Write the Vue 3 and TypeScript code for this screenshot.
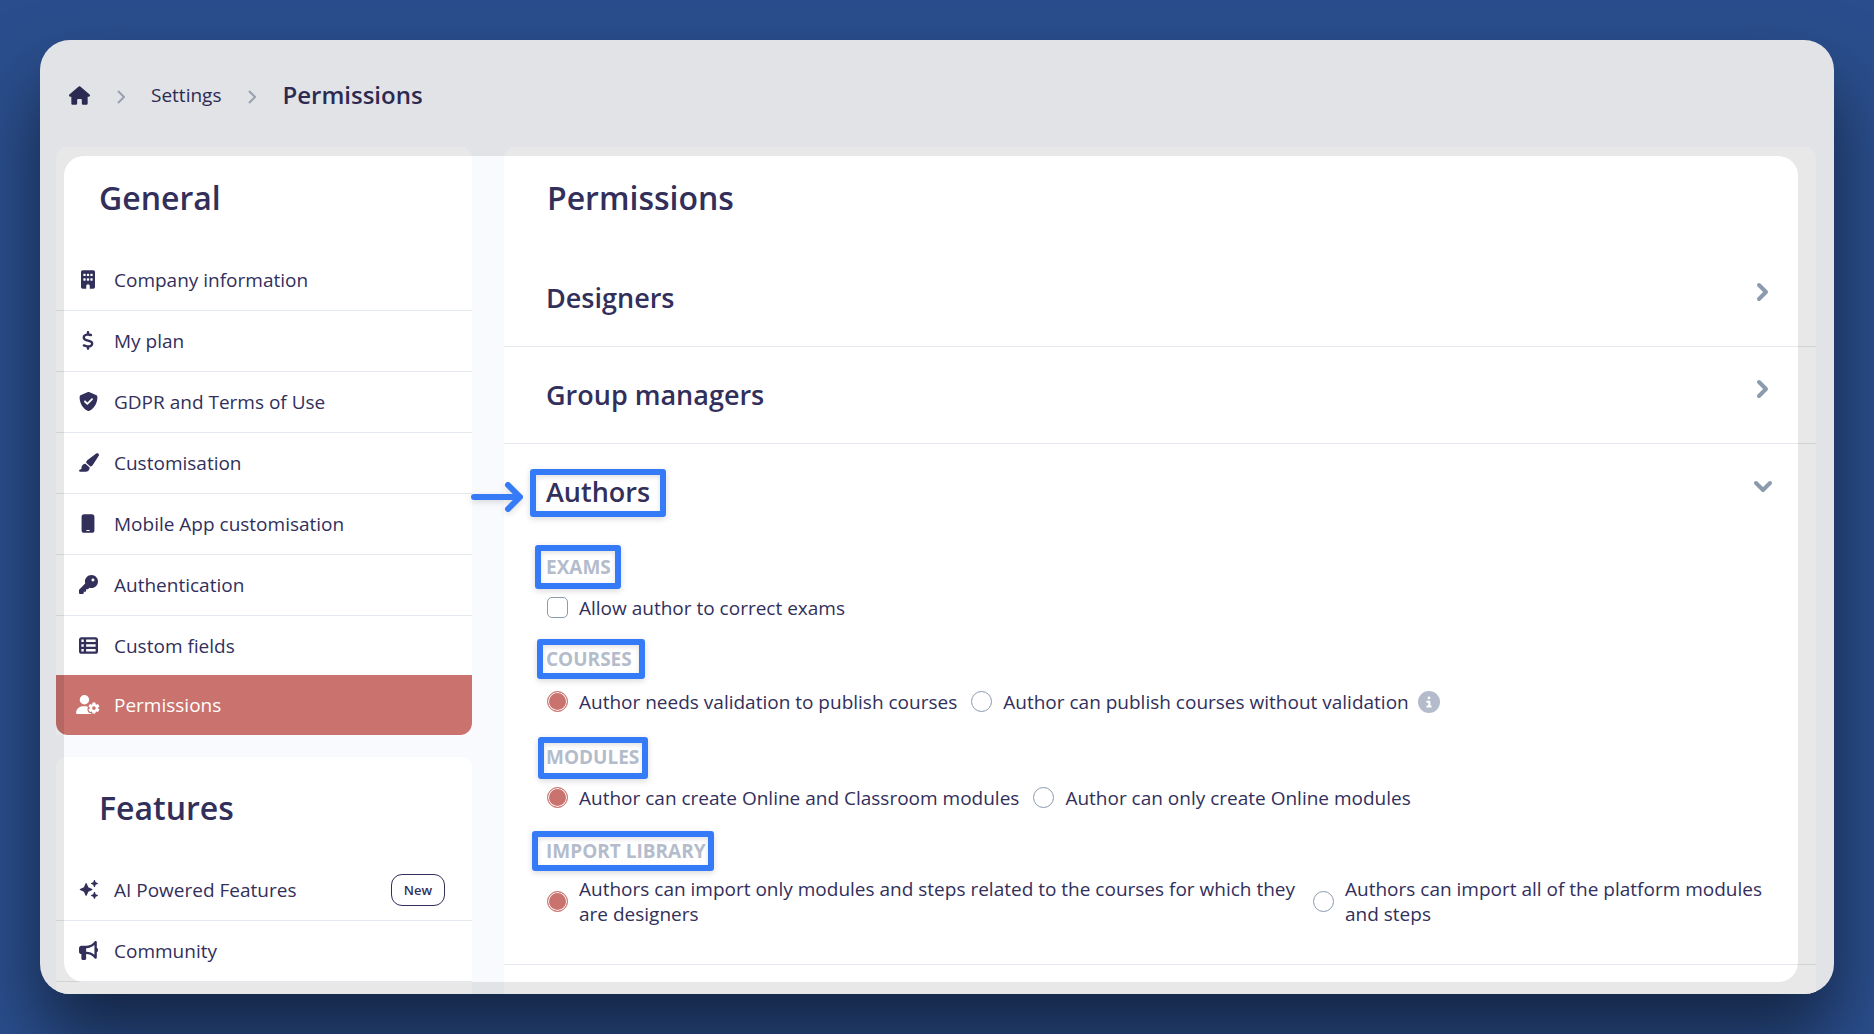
<script setup lang="ts">
import { ref } from 'vue'

interface MenuItem {
  label: string
  icon: string
  active?: boolean
  badge?: string
}

interface Icon {
  box: string
  width: number
  d: string
}

const icons: Record<string, Icon> = {
  building: {
    box: '0 0 384 512',
    width: 14,
    d: 'M48 0C21.5 0 0 21.5 0 48V464c0 26.5 21.5 48 48 48h96V432c0-26.5 21.5-48 48-48s48 21.5 48 48v80h96c26.5 0 48-21.5 48-48V48c0-26.5-21.5-48-48-48H48zM64 240c0-8.8 7.2-16 16-16h32c8.8 0 16 7.2 16 16v32c0 8.8-7.2 16-16 16H80c-8.8 0-16-7.2-16-16V240zm112-16h32c8.8 0 16 7.2 16 16v32c0 8.8-7.2 16-16 16H176c-8.8 0-16-7.2-16-16V240c0-8.8 7.2-16 16-16zm80 16c0-8.8 7.2-16 16-16h32c8.8 0 16 7.2 16 16v32c0 8.8-7.2 16-16 16H272c-8.8 0-16-7.2-16-16V240zM80 96h32c8.8 0 16 7.2 16 16v32c0 8.8-7.2 16-16 16H80c-8.8 0-16-7.2-16-16V112c0-8.8 7.2-16 16-16zm80 16c0-8.8 7.2-16 16-16h32c8.8 0 16 7.2 16 16v32c0 8.8-7.2 16-16 16H176c-8.8 0-16-7.2-16-16V112zM272 96h32c8.8 0 16 7.2 16 16v32c0 8.8-7.2 16-16 16H272c-8.8 0-16-7.2-16-16V112c0-8.8 7.2-16 16-16z',
  },
  dollar: {
    box: '0 0 320 512',
    width: 12,
    d: 'M160 0c17.7 0 32 14.3 32 32V67.7c1.6 .2 3.1 .4 4.7 .7c.4 .1 .7 .1 1.1 .2l48 8.8c17.4 3.2 28.9 19.9 25.7 37.2s-19.9 28.9-37.2 25.7l-47.5-8.7c-31.3-4.6-58.9-1.5-78.3 6.2s-27.2 18.3-29 28.1c-2 10.7-.5 16.7 1.2 20.4c1.8 3.9 5.5 8.3 12.8 13.2c16.3 10.7 41.3 17.7 73.7 26.3l2.9 .8c28.6 7.6 63.6 16.8 89.6 33.8c14.2 9.3 27.6 21.9 35.9 39.5c8.5 17.9 10.3 37.9 6.4 59.2c-6.9 38-33.1 63.4-65.6 76.7c-13.7 5.6-28.6 9.2-44.4 11V480c0 17.7-14.3 32-32 32s-32-14.3-32-32V445.1c-.4-.1-.9-.1-1.3-.2l-.2 0 0 0c-24.4-3.8-64.5-14.3-91.5-26.3c-16.1-7.2-23.4-26.1-16.2-42.2s26.1-23.4 42.2-16.2c20.9 9.3 55.3 18.5 75.2 21.6c31.9 4.7 58.2 2 76-5.3c16.9-6.9 24.6-16.9 26.8-28.9c1.9-10.6 .4-16.7-1.3-20.4c-1.9-4-5.6-8.4-13-13.3c-16.4-10.7-41.5-17.7-74-26.3l-2.8-.7 0 0C119.4 279.3 84.4 270 58.4 253c-14.2-9.3-27.5-22-35.8-39.6c-8.4-17.9-10.1-37.9-6.1-59.2C23.7 116 52.3 91.2 84.8 78.3c13.3-5.3 27.9-8.9 43.2-11V32c0-17.7 14.3-32 32-32z',
  },
  shield: {
    box: '0 0 512 512',
    width: 19,
    d: 'M256 0c4.6 0 9.2 1 13.4 2.9L457.7 82.8c22 9.3 38.4 31 38.3 57.2c-.5 99.2-41.3 280.7-213.6 363.2c-16.7 8-36.1 8-52.8 0C57.3 420.7 16.5 239.2 16 140c-.1-26.2 16.3-47.9 38.3-57.2L242.7 2.9C246.8 1 251.4 0 256 0zM369 209c9-9 9-25 0-34s-25-9-34 0L224 286l-47-47c-9-9-25-9-34 0s-9 25 0 34l64 64c9 9 25 9 34 0L369 209z',
  },
  brush: {
    box: '0 0 576 512',
    width: 21,
    d: 'M339.3 367.1c27.3-3.9 51.9-19.4 67.2-42.9L568.2 74.1c12.6-19.5 9.4-45.3-7.6-61.2S517.7-4.4 499.1 9.6L262.4 187.2c-24 18-38.2 46.1-38.4 76.1L339.3 367.1zm-19.6 25.4l-116-104.4C143.9 290.3 96 339.6 96 400c0 3.9 .2 7.8 .6 11.6C98.4 429.1 86.4 448 68.8 448H64c-17.7 0-32 14.3-32 32s14.3 32 32 32H208c61.9 0 112-50.1 112-112c0-2.5-.1-5-.2-7.5z',
  },
  mobile: {
    box: '0 0 384 512',
    width: 14,
    d: 'M80 0C45 0 16 29 16 64V448c0 35 29 64 64 64H304c35 0 64-29 64-64V64c0-35-29-64-64-64H80zM160 432h64c9 0 16 7 16 16s-7 16-16 16H160c-9 0-16-7-16-16s7-16 16-16z',
  },
  key: {
    box: '0 0 512 512',
    width: 19,
    d: 'M336 352c97.2 0 176-78.8 176-176S433.2 0 336 0S160 78.8 160 176c0 18.7 2.9 36.8 8.3 53.7L7 391c-4.5 4.5-7 10.6-7 17v80c0 13.3 10.7 24 24 24h80c13.3 0 24-10.7 24-24V448h40c13.3 0 24-10.7 24-24V384h40c6.4 0 12.5-2.5 17-7l33.3-33.3c16.9 5.4 35 8.3 53.7 8.3zM376 96a40 40 0 1 1 0 80 40 40 0 1 1 0-80z',
  },
  table: {
    box: '0 0 512 512',
    width: 19,
    d: 'M64 32C29 32 0 61 0 96V416c0 35 29 64 64 64H448c35 0 64-29 64-64V96c0-35-29-64-64-64H64zM64 96h64v64H64zM192 96H448v64H192zM64 224h64v64H64zM192 224H448v64H192zM64 352h64v64H64zM192 352H448v64H192z',
  },
  userGear: {
    box: '0 0 640 512',
    width: 24,
    d: 'M224 0a128 128 0 1 1 0 256A128 128 0 1 1 224 0zM178.3 304h91.4c11.8 0 23.4 1.2 34.5 3.3c-2.1 18.5 7.4 35.6 21.8 44.8c-16.6 10.6-26.7 31.6-20 53.3c4 12.9 9.4 25.5 16.4 37.6s15.2 23.1 24.4 33c15.7 16.9 39.6 18.4 57.2 8.7v.9c0 9.2 2.7 18.5 7.9 26.3H29.7C13.3 512 0 498.7 0 482.3C0 383.8 79.8 304 178.3 304zM436 218.2c0-7 4.5-13.3 11.3-14.8c10.5-2.4 21.5-3.7 32.7-3.7s22.2 1.3 32.7 3.7c6.8 1.5 11.3 7.8 11.3 14.8v30.6c7.9 3.4 15.4 7.7 22.3 12.8l24.9-14.3c6.1-3.5 13.7-2.7 18.5 2.4c7.6 8.1 14.3 17.2 20.1 27.2s10.3 20.4 13.5 31c2.1 6.7-1.1 13.7-7.2 17.2l-25 14.4c.4 4 .7 8.1 .7 12.3s-.2 8.2-.7 12.3l25 14.4c6.1 3.5 9.2 10.5 7.2 17.2c-3.3 10.6-7.8 21-13.5 31s-12.5 19.1-20.1 27.2c-4.8 5.1-12.5 5.9-18.5 2.4l-24.9-14.3c-6.9 5.1-14.3 9.4-22.3 12.8l0 30.6c0 7-4.5 13.3-11.3 14.8c-10.5 2.4-21.5 3.7-32.7 3.7s-22.2-1.3-32.7-3.7c-6.8-1.5-11.3-7.8-11.3-14.8V454.8c-8-3.4-15.6-7.7-22.5-12.9l-24.7 14.3c-6.1 3.5-13.7 2.7-18.5-2.4c-7.6-8.1-14.3-17.2-20.1-27.2s-10.3-20.4-13.5-31c-2.1-6.7 1.1-13.7 7.2-17.2l24.8-14.3c-.4-4.1-.7-8.2-.7-12.4s.2-8.3 .7-12.4L343.8 325c-6.1-3.5-9.2-10.5-7.2-17.2c3.3-10.6 7.7-21 13.5-31s12.5-19.1 20.1-27.2c4.8-5.1 12.4-5.9 18.5-2.4l24.8 14.3c6.9-5.1 14.5-9.4 22.5-12.9V218.2zm92.1 133.5a48.1 48.1 0 1 0 -96.1 0 48.1 48.1 0 1 0 96.1 0z',
  },
  sparkles: {
    box: '0 0 512 512',
    width: 19,
    d: 'M192 80c8 0 12 4 15 11l45 103 103 46c14 6 14 26 0 32l-103 45-45 103c-6 14-24 14-30 0l-45-103-103-45c-14-6-14-26 0-32l103-46 45-103c3-7 7-11 15-11zM416 0c8 0 12 4 15 12l18 51 51 18c16 6 16 24 0 30l-51 18-18 51c-6 16-24 16-30 0l-18-51-51-18c-16-6-16-24 0-30l51-18 18-51c3-8 7-12 15-12zM416 320c8 0 12 4 15 12l18 51 51 18c16 6 16 24 0 30l-51 18-18 51c-6 16-24 16-30 0l-18-51-51-18c-16-6-16-24 0-30l51-18 18-51c3-8 7-12 15-12z',
  },
  bullhorn: {
    box: '0 0 512 512',
    width: 19,
    d: 'M480 32c0-12.9-7.8-24.6-19.8-29.6s-25.7-2.2-34.9 6.9L381.7 53c-48 48-113.1 75-181 75H192 160 64c-35.3 0-64 28.7-64 64v96c0 35.3 28.7 64 64 64l0 128c0 17.7 14.3 32 32 32h64c17.7 0 32-14.3 32-32V352l8.7 0c67.9 0 133 27 181 75l43.6 43.6c9.2 9.2 22.9 11.9 34.9 6.9s19.8-16.6 19.8-29.6V300.4c18.6-8.8 32-32.5 32-60.4s-13.4-51.6-32-60.4V32zm-64 76.7V240 371.3C357.2 317.8 280.5 288 200.7 288H192V192h8.7c79.8 0 156.5-29.8 215.3-83.3z',
  },
}

const groups: { title: string; items: MenuItem[] }[] = [
  {
    title: 'General',
    items: [
      { label: 'Company information', icon: 'building' },
      { label: 'My plan', icon: 'dollar' },
      { label: 'GDPR and Terms of Use', icon: 'shield' },
      { label: 'Customisation', icon: 'brush' },
      { label: 'Mobile App customisation', icon: 'mobile' },
      { label: 'Authentication', icon: 'key' },
      { label: 'Custom fields', icon: 'table' },
      { label: 'Permissions', icon: 'userGear', active: true },
    ],
  },
  {
    title: 'Features',
    items: [
      { label: 'AI Powered Features', icon: 'sparkles', badge: 'New' },
      { label: 'Community', icon: 'bullhorn' },
    ],
  },
]

const correctExams = ref(false)
const publishing = ref('validation')
const modules = ref('all')
const library = ref('related')
</script>

<template>
  <div class="page">
    <div class="window">
      <nav class="crumbs" aria-label="Breadcrumb">
        <a href="#" class="home" aria-label="Home">
          <svg viewBox="0 0 576 512" width="21" height="19"><path fill="currentColor" d="M575.8 255.5c0 18-15 32.1-32 32.1h-32l.7 160.2c0 2.7-.2 5.4-.5 8.1V472c0 22.1-17.9 40-40 40H456c-1.1 0-2.2 0-3.3-.1c-1.4 .1-2.8 .1-4.2 .1H416 392c-22.1 0-40-17.9-40-40V448 384c0-17.7-14.3-32-32-32H256c-17.7 0-32 14.3-32 32v64 24c0 22.1-17.9 40-40 40H160 128.1c-1.5 0-3-.1-4.5-.2c-1.2 .1-2.4 .2-3.6 .2H104c-22.1 0-40-17.9-40-40V360c0-.9 0-1.9 .1-2.8V287.6H32c-18 0-32-14-32-32.1c0-9 3-17 10-24L266.4 8c7-7 15-8 22-8s15 2 21 7L564.8 231.5c8 7 12 15 11 24z" /></svg>
        </a>
        <svg class="crumb-arrow" viewBox="0 0 8 14" width="8" height="14"><path d="M1 1l6 6-6 6" /></svg>
        <a href="#" class="crumb">Settings</a>
        <svg class="crumb-arrow" viewBox="0 0 8 14" width="8" height="14"><path d="M1 1l6 6-6 6" /></svg>
        <h1 class="crumb-current">Permissions</h1>
      </nav>

      <div class="columns">
        <aside class="sidebar">
          <section v-for="group in groups" :key="group.title" class="card menu">
            <h2 class="card-title">{{ group.title }}</h2>
            <a
              v-for="item in group.items"
              :key="item.label"
              href="#"
              class="menu-item"
              :class="{ active: item.active }"
            >
              <span class="menu-icon">
                <svg :viewBox="icons[item.icon].box" :width="icons[item.icon].width" height="19">
                  <path fill="currentColor" fill-rule="evenodd" :d="icons[item.icon].d" />
                </svg>
              </span>
              <span class="menu-label">{{ item.label }}</span>
              <span v-if="item.badge" class="badge">{{ item.badge }}</span>
            </a>
          </section>
        </aside>

        <main class="card">
          <h2 class="card-title">Permissions</h2>

          <h3 class="role">
            <button type="button" class="role-button" aria-expanded="false">
              <span>Designers</span>
              <svg class="chevron" viewBox="0 0 20 20" width="20" height="20"><path d="M6 3l7 7-7 7" /></svg>
            </button>
          </h3>
          <h3 class="role">
            <button type="button" class="role-button" aria-expanded="false">
              <span>Group managers</span>
              <svg class="chevron" viewBox="0 0 20 20" width="20" height="20"><path d="M6 3l7 7-7 7" /></svg>
            </button>
          </h3>
          <h3 class="role open">
            <button type="button" class="role-button" aria-expanded="true">
              <span class="marked mark-authors">
                Authors
                <svg class="pointer" viewBox="0 0 52 30" width="52" height="30"><path d="M3 15h45M37 3l12 12-12 12" /></svg>
              </span>
              <svg class="chevron" viewBox="0 0 20 20" width="20" height="20"><path d="M3 7l7 7 7-7" /></svg>
            </button>
          </h3>

          <div class="settings">
            <section class="setting compact">
              <h4 class="caption"><span class="marked mark-exams">EXAMS</span></h4>
              <div class="options">
                <label class="option">
                  <input v-model="correctExams" type="checkbox" class="box" />
                  <span>Allow author to correct exams</span>
                </label>
              </div>
            </section>

            <section class="setting">
              <h4 class="caption"><span class="marked mark-courses">COURSES</span></h4>
              <div class="options with-info">
                <label class="option">
                  <input v-model="publishing" type="radio" name="publishing" value="validation" class="dot" />
                  <span>Author needs validation to publish courses</span>
                </label>
                <label class="option">
                  <input v-model="publishing" type="radio" name="publishing" value="free" class="dot" />
                  <span>Author can publish courses without validation</span>
                </label>
                <button type="button" class="info" aria-label="More information">
                  <svg viewBox="0 0 512 512" width="22" height="22"><path fill="currentColor" fill-rule="evenodd" d="M256 512A256 256 0 1 0 256 0a256 256 0 1 0 0 512zM216 336h24V272H216c-13.3 0-24-10.7-24-24s10.7-24 24-24h48c13.3 0 24 10.7 24 24v88h8c13.3 0 24 10.7 24 24s-10.7 24-24 24H216c-13.3 0-24-10.7-24-24s10.7-24 24-24zm40-208a32 32 0 1 1 0 64 32 32 0 1 1 0-64z" /></svg>
                </button>
              </div>
            </section>

            <section class="setting">
              <h4 class="caption"><span class="marked mark-modules">MODULES</span></h4>
              <div class="options">
                <label class="option">
                  <input v-model="modules" type="radio" name="modules" value="all" class="dot" />
                  <span>Author can create Online and Classroom modules</span>
                </label>
                <label class="option">
                  <input v-model="modules" type="radio" name="modules" value="online" class="dot" />
                  <span>Author can only create Online modules</span>
                </label>
              </div>
            </section>

            <section class="setting">
              <h4 class="caption"><span class="marked mark-library">IMPORT LIBRARY</span></h4>
              <div class="options split">
                <label class="option">
                  <input v-model="library" type="radio" name="library" value="related" class="dot" />
                  <span>Authors can import only modules and steps related to the courses for which they are designers</span>
                </label>
                <label class="option">
                  <input v-model="library" type="radio" name="library" value="platform" class="dot" />
                  <span>Authors can import all of the platform modules and steps</span>
                </label>
              </div>
            </section>
          </div>
        </main>
      </div>

      <div class="spotlight" aria-hidden="true"></div>
    </div>
  </div>
</template>

<style>
body {
  margin: 0;
  background: #2a4e8d;
}
</style>

<style scoped>
* {
  box-sizing: border-box;
}

.page {
  height: 100vh;
  padding: 40px;
  overflow: hidden;
  background: #2a4e8d;
  color: #322f5b;
  font-family: "Open Sans", "Noto Sans", sans-serif;
  font-size: 19px;
  line-height: 25px;
}

.window {
  position: relative;
  display: flex;
  flex-direction: column;
  height: 100%;
  overflow: hidden;
  border-radius: 30px;
  background: #f8fafd;
  box-shadow: 0 44px 75px rgba(0, 0, 0, 0.52);
}

/* Dims everything outside of the highlighted area */
.spotlight {
  position: absolute;
  inset: 116px 36px 12px 24px;
  border-radius: 20px;
  box-shadow: 0 0 0 200px rgba(0, 0, 0, 0.09);
  pointer-events: none;
}

a {
  color: inherit;
  text-decoration: none;
}

h1,
h2,
h3,
h4 {
  margin: 0;
  font-weight: 600;
}

button {
  padding: 0;
  border: 0;
  background: none;
  color: inherit;
  font: inherit;
  text-align: left;
  cursor: pointer;
}

svg {
  display: block;
  flex: none;
}

.crumbs {
  display: flex;
  flex: none;
  align-items: center;
  gap: 27px;
  height: 107px;
  padding: 3px 29px 0;
}

.crumb-arrow {
  height: 18px;
  margin-right: -1px;
  padding-top: 4px;
  fill: none;
  stroke: #a9b0c0;
  stroke-width: 2;
}

.crumb-current {
  font-size: 24px;
  line-height: 32px;
}

.columns {
  display: grid;
  flex: 1;
  grid-template-columns: 416px 1fr;
  gap: 32px;
  padding: 0 18px 0 16px;
}

.sidebar {
  display: flex;
  flex-direction: column;
  gap: 22px;
}

.card {
  border-radius: 10px 10px 0 0;
  background: #fff;
}

.menu:last-child {
  flex: 1;
}

.card-title {
  padding: 29px 43px 30px;
  font-size: 32px;
  line-height: 44px;
}

.menu-item {
  display: flex;
  align-items: center;
  gap: 14px;
  min-height: 61px;
  padding: 14px 27px 14px 20px;
  border-bottom: 1px solid #e3e9ee;
}

.menu-item.active {
  min-height: 60px;
  margin-top: -2px;
  border-bottom: 0;
  border-radius: 0 0 12px 12px;
  background: #ca726d;
  color: #fff;
}

.menu-icon {
  display: flex;
  justify-content: center;
  width: 24px;
  padding-bottom: 2px;
}

.menu-label {
  flex: 1;
}

.badge {
  padding: 0 12px;
  border: 1px solid currentColor;
  border-radius: 11px;
  font-size: 13px;
  font-weight: 600;
  line-height: 30px;
}

.role {
  border-bottom: 1px solid #e3e9ee;
  font-size: 27px;
  line-height: 36px;
}

.role.open {
  border-bottom: 0;
}

.role-button {
  display: flex;
  align-items: center;
  justify-content: space-between;
  width: 100%;
  height: 96px;
  padding: 0 43px 0 42px;
}

.chevron {
  height: 32px;
  padding-bottom: 12px;
  fill: none;
  stroke: #8c9aad;
  stroke-width: 4;
  stroke-linecap: round;
  stroke-linejoin: round;
}

.settings {
  display: flex;
  flex-direction: column;
  gap: 28px;
  padding: 14px 43px 38px 42px;
  border-bottom: 1px solid #e3e9ee;
}

.compact {
  margin-bottom: -2px;
}

.caption {
  color: #b4bccb;
  font-weight: 700;
  line-height: 26px;
}

.options {
  display: flex;
  gap: 14px;
  padding: 15px 0 0 1px;
}

.with-info {
  align-items: center;
  min-height: 44px;
}

.split {
  display: grid;
  grid-template-columns: 1fr 460px;
  padding-top: 12px;
}

.option {
  display: flex;
  align-items: center;
  gap: 11px;
}

.option span {
  margin: 1px 0 -1px;
}

.box,
.dot {
  flex: none;
  width: 21px;
  height: 21px;
  margin: 0;
  appearance: none;
  border: 1px solid #8c9aad;
  background: #fff;
}

.box {
  border-radius: 5px;
}

.dot {
  border-radius: 50%;
}

.dot:checked,
.box:checked {
  border-color: #ca726d;
  background: #ca726d;
  box-shadow: inset 0 0 0 1px #fff;
}

.info {
  margin-left: -5px;
  color: #b4bccb;
}

/* Tutorial markers drawn over the headings */
.marked {
  position: relative;
}

.marked::after {
  content: "";
  position: absolute;
  inset: var(--mark);
  border: 6px solid #357af6;
  border-radius: 3px;
  box-shadow: 0 2px 6px rgba(0, 0, 0, 0.15), inset 0 2px 5px rgba(0, 0, 0, 0.12);
  pointer-events: none;
}

.mark-authors {
  --mark: -5px -16px -7px -16px;
}

.mark-exams {
  --mark: -9px -10px -9px -11px;
}

.mark-courses {
  --mark: -7px -13px -7px -9px;
}

.mark-modules {
  --mark: -7px -9px -9px -8px;
}

.mark-library {
  --mark: -7px -8px -7px -14px;
}

.pointer {
  position: absolute;
  top: 8px;
  left: -75px;
  fill: none;
  stroke: #357af6;
  stroke-width: 6;
  stroke-linecap: round;
  stroke-linejoin: round;
  filter: drop-shadow(0 2px 3px rgba(0, 0, 0, 0.15));
}
</style>
